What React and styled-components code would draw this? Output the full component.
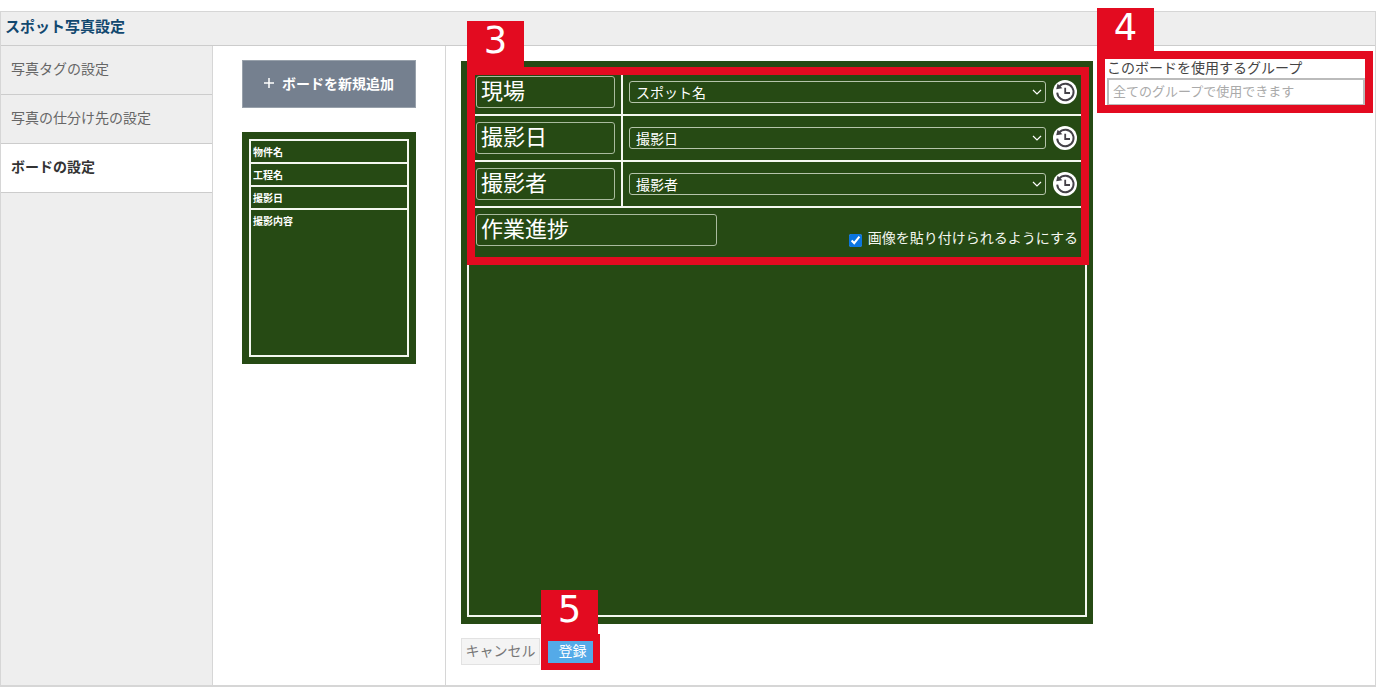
import React from "react";
import styled, { createGlobalStyle } from "styled-components";

const green = "#264a14";
const red = "#e30b20";
const line = "#d6d6d6";
const chalk = "#f4f7f0";

const GlobalStyle = createGlobalStyle`
  *, *::before, *::after { box-sizing: border-box; }
  body {
    margin: 0;
    background: #fff;
    color: #444;
    font-family: "Noto Sans CJK JP", sans-serif;
    font-size: 14px;
    line-height: 20px;
  }
  button, input, select { font: inherit; }
`;

const Page = styled.div`
  display: flex;
  flex-direction: column;
  min-height: 100vh;
  padding: 11px 0 1px;
`;

const Frame = styled.div`
  flex: 1;
  display: flex;
  flex-direction: column;
  border: 1px solid ${line};
  border-bottom-width: 2px;
`;

const Header = styled.header`
  height: 34px;
  padding: 4px;
  background: #eee;
  border-bottom: 1px solid #ccc;
`;

const Title = styled.h1`
  margin: 0;
  font-size: 15px;
  line-height: 20px;
  font-weight: 700;
  color: #12486f;
`;

const Columns = styled.div`
  flex: 1;
  display: grid;
  grid-template-columns: 212px 233px minmax(0, 1fr) 270px;
`;

const Sidebar = styled.nav`
  background: #eee;
  border-right: 1px solid ${line};
`;

const SideLink = styled.a`
  display: block;
  height: 49px;
  padding: 12px 10px;
  border-bottom: 1px solid #ccc;
  text-decoration: none;
  color: ${(p) => (p.$active ? "#333" : "#666")};
  background: ${(p) => (p.$active ? "#fff" : "transparent")};
  font-weight: ${(p) => (p.$active ? 700 : 400)};
`;

const BoardList = styled.section`
  padding: 14px 29px;
  border-right: 1px solid ${line};
`;

const AddButton = styled.button`
  display: flex;
  align-items: center;
  justify-content: center;
  gap: 8px;
  width: 100%;
  height: 48px;
  padding: 0 0 2px;
  margin-bottom: 24px;
  border: 1px solid #98a1ab;
  background: #75808f;
  color: #fff;
  font-weight: 700;
`;

const Thumbnail = styled.div`
  padding: 7px;
  background: ${green};
`;

const ThumbList = styled.ul`
  list-style: none;
  margin: 0;
  padding: 0;
  border: 2px solid ${chalk};
`;

const ThumbRow = styled.li`
  height: ${(p) => (p.$tall ? "145px" : "23px")};
  padding: 0 2px;
  border-bottom: ${(p) => (p.$tall ? "none" : `2px solid ${chalk}`)};
  color: #fff;
  font-size: 10px;
  line-height: 21px;
  font-weight: 700;
`;

const Editor = styled.main`
  padding: 15px 12px 15px 15px;
`;

const Board = styled.div`
  padding: 7px 6px;
  background: ${green};
`;

const BoardFrame = styled.div`
  border: 2px solid ${chalk};
`;

const Fields = styled.div`
  position: relative;
`;

const FieldRow = styled.div`
  display: flex;
  height: 46px;
  border-bottom: 2px solid ${chalk};
`;

const NameCell = styled.div`
  display: flex;
  align-items: center;
  width: 154px;
  padding: 0 7px;
  border-right: 2px solid ${chalk};
`;

const ValueCell = styled.div`
  flex: 1;
  display: flex;
  align-items: center;
  gap: 7px;
  padding: 0 8px 0 6px;
`;

const NameInput = styled.input`
  width: ${(p) => (p.$wide ? "241px" : "139px")};
  height: 32px;
  padding: 0 4px 6px;
  border: 1px solid #a9bb9e;
  border-radius: 3px;
  background: transparent;
  color: #fff;
  font-size: 22px;
  line-height: 24px;
`;

const SelectBox = styled.div`
  position: relative;
  flex: 1;
  display: flex;
`;

const Select = styled.select`
  appearance: none;
  width: 100%;
  height: 22px;
  padding: 0 24px 0 6px;
  border: 1px solid #b5c4ab;
  border-radius: 3px;
  background: transparent;
  color: #fff;
  line-height: 20px;
`;

const Chevron = styled.svg`
  position: absolute;
  right: 4px;
  top: 6px;
  pointer-events: none;
`;

const HistoryButton = styled.button`
  display: flex;
  width: 24px;
  height: 24px;
  padding: 0;
  border: 0;
  border-radius: 50%;
  background: #fff;
`;

const PhotoRow = styled.div`
  display: flex;
  align-items: flex-end;
  justify-content: space-between;
  height: 50px;
  padding: 6px 7px 8px;
  & > input { align-self: flex-start; }
`;

const CheckLabel = styled.label`
  display: flex;
  align-items: flex-end;
  gap: 6px;
  height: 22px;
  line-height: 18px;
  color: ${chalk};
  & > span { align-self: flex-start; }
`;

const Checkbox = styled.input`
  width: 13px;
  height: 13px;
  margin: 0 0 3px;
  accent-color: #0b75e0;
`;

const PhotoArea = styled.div`
  height: 357px;
`;

const Actions = styled.div`
  display: flex;
  gap: 8px;
  align-items: center;
  margin-top: 14px;
`;

const CancelButton = styled.button`
  width: 79px;
  height: 27px;
  padding: 0 0 4px;
  border: 1px solid #e2e2e2;
  background: #f4f4f4;
  color: #777;
  line-height: 20px;
`;

const Submit = styled.div`
  position: relative;
`;

const SubmitButton = styled.button`
  display: block;
  width: 45px;
  height: 22px;
  padding: 0 0 4px 4px;
  border: 0;
  background: #54aae8;
  color: #fff;
  line-height: 18px;
`;

const GroupPanel = styled.aside`
  padding: 12px 10px 12px 2px;
`;

const GroupField = styled.div`
  position: relative;
`;

const GroupLabel = styled.label`
  display: block;
  height: 20px;
  line-height: 18px;
  color: #444;
`;

const GroupInput = styled.input`
  display: block;
  width: 100%;
  height: 28px;
  padding: 0 4px 4px;
  border: 2px solid #bbb;
  background: #fff;
  font-size: 13px;
  &::placeholder { color: #aaa; opacity: 1; }
`;

const Callout = styled.div`
  position: absolute;
  inset: ${(p) => p.$inset};
  border: ${(p) => p.$thickness} solid ${red};
  pointer-events: none;
`;

const CalloutTab = styled.span`
  position: absolute;
  left: -${(p) => p.$thickness};
  bottom: 100%;
  width: 57px;
  height: ${(p) => p.$height};
  background: ${red};
  color: #fff;
  font-family: "DejaVu Sans", sans-serif;
  font-size: 37px;
  line-height: 40px;
  text-align: center;
`;

function Marker({ number, inset, thickness = "8px", height = "51px" }) {
  return (
    <Callout $inset={inset} $thickness={thickness}>
      <CalloutTab $thickness={thickness} $height={height}>
        {number}
      </CalloutTab>
    </Callout>
  );
}

function HistoryIcon() {
  return (
    <svg width="24" height="24" viewBox="0 0 24 24" fill="none" stroke="#444148" aria-hidden="true">
      <path d="M6.2 6.6A8.2 8.2 0 1 1 4.2 12.6" strokeWidth="1.9" />
      <path d="M3.2 9.2L4.6 3.8L9.4 8.2Z" fill="#444148" stroke="none" />
      <path d="M12.2 7.8V13H17" strokeWidth="1.8" />
    </svg>
  );
}

function BoardField({ id, name, value }) {
  return (
    <FieldRow>
      <NameCell>
        <NameInput id={id} aria-label="項目名" defaultValue={name} />
      </NameCell>
      <ValueCell>
        <SelectBox>
          <Select aria-labelledby={id} defaultValue={value}>
            <option>{value}</option>
          </Select>
          <Chevron width="10" height="10" viewBox="0 0 10 10" fill="none" stroke="#fff" aria-hidden="true">
            <path d="M1 3L5 7L9 3" strokeWidth="1.2" />
          </Chevron>
        </SelectBox>
        <HistoryButton type="button" aria-label="履歴">
          <HistoryIcon />
        </HistoryButton>
      </ValueCell>
    </FieldRow>
  );
}

const menu = ["写真タグの設定", "写真の仕分け先の設定", "ボードの設定"];
const thumbRows = ["物件名", "工程名", "撮影日", "撮影内容"];
const fields = [
  { id: "field-site", name: "現場", value: "スポット名" },
  { id: "field-date", name: "撮影日", value: "撮影日" },
  { id: "field-person", name: "撮影者", value: "撮影者" },
];

export default function App() {
  return (
    <Page>
      <GlobalStyle />
      <Frame>
        <Header>
          <Title>スポット写真設定</Title>
        </Header>
        <Columns>
          <Sidebar>
            {menu.map((item, i) => (
              <SideLink key={item} href="#" $active={i === 2}>
                {item}
              </SideLink>
            ))}
          </Sidebar>
          <BoardList>
            <AddButton type="button">
              <svg width="10" height="10" viewBox="0 0 10 10" stroke="#fff" strokeWidth="1.5" aria-hidden="true">
                <path d="M5 0V10M0 5H10" />
              </svg>
              ボードを新規追加
            </AddButton>
            <Thumbnail>
              <ThumbList>
                {thumbRows.map((row, i) => (
                  <ThumbRow key={row} $tall={i === 3}>
                    {row}
                  </ThumbRow>
                ))}
              </ThumbList>
            </Thumbnail>
          </BoardList>
          <Editor>
            <Board>
              <BoardFrame>
                <Fields>
                  {fields.map((f) => (
                    <BoardField key={f.id} {...f} />
                  ))}
                  <PhotoRow>
                    <NameInput $wide aria-label="項目名" defaultValue="作業進捗" />
                    <CheckLabel>
                      <Checkbox type="checkbox" defaultChecked />
                      <span>画像を貼り付けられるようにする</span>
                    </CheckLabel>
                  </PhotoRow>
                  <Marker number="3" inset="-3px -4px -7px -2px" height="54px" />
                </Fields>
                <PhotoArea />
              </BoardFrame>
            </Board>
            <Actions>
              <CancelButton type="button">キャンセル</CancelButton>
              <Submit>
                <SubmitButton type="button">登録</SubmitButton>
                <Marker number="5" inset="-7px" thickness="7px" />
              </Submit>
            </Actions>
          </Editor>
          <GroupPanel>
            <GroupField>
              <GroupLabel htmlFor="group">このボードを使用するグループ</GroupLabel>
              <GroupInput id="group" placeholder="全てのグループで使用できます" />
              <Marker number="4" inset="-7px -8px -7px -10px" />
            </GroupField>
          </GroupPanel>
        </Columns>
      </Frame>
    </Page>
  );
}
